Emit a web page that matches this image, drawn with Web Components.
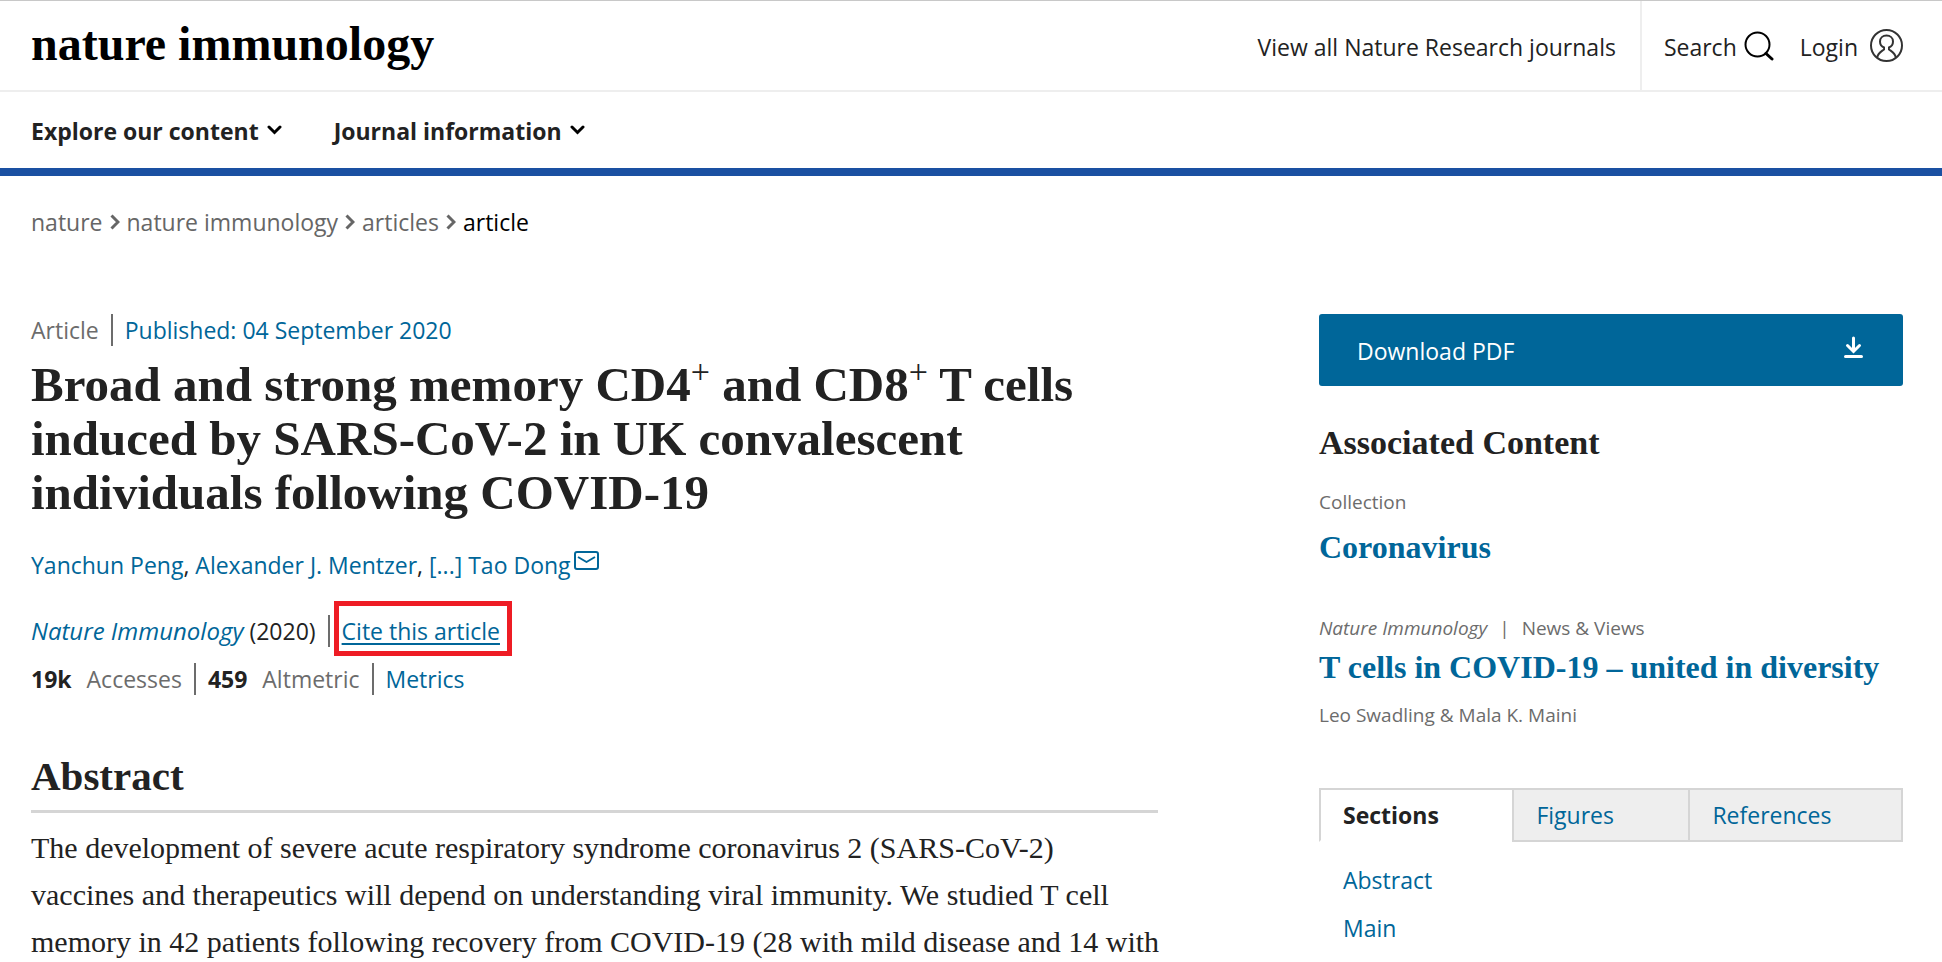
<!DOCTYPE html>
<html lang="en">
<head>
<meta charset="utf-8">
<title>Broad and strong memory CD4+ and CD8+ T cells | Nature Immunology</title>
<style>
  body {
    margin: 0;
    background: #fff;
    color: #222;
    font: 23px/32px "Open Sans", "Noto Sans", sans-serif;
    --serif: "Liberation Serif", serif;
    --link: #069;
    --brand: #1a50a2;
    --muted: #6c6c6c;
    --rule: #d5d5d5;
    --small: 19px;
  }
</style>
</head>
<body>
<journal-page></journal-page>

<template id="journal-header">
  <style>
    :host { display: block; border-top: 1px solid #c8c8c8; border-bottom: 8px solid var(--brand); }
    a, button { color: inherit; text-decoration: none; }
    svg { fill: none; stroke: #000; flex: none; }
    .top { display: flex; align-items: stretch; height: 89px; padding: 0 39px 0 31px; border-bottom: 2px solid #eee; }
    .logo { margin: 0 auto 4px 0; align-self: center; font: bold 48px/54px var(--serif); color: #000; }
    .all { display: flex; align-items: center; padding: 2px 24px 0 0; border-right: 2px solid #eee; }
    .tools { display: flex; align-items: center; gap: 26px; padding-left: 22px; }
    .tools a { display: flex; align-items: center; gap: 7px; }
    .tools a + a { gap: 12px; }
    .tools span { padding-top: 2px; }
    nav { display: flex; align-items: center; gap: 52px; height: 76px; padding: 0 31px; }
    nav button { display: flex; align-items: center; gap: 8px; padding: 0; border: 0; background: none; font: bold 23px/32px "Open Sans", "Noto Sans", sans-serif; }
    nav span { padding-top: 2px; }
  </style>
  <div class="top">
    <a class="logo" href="#">nature immunology</a>
    <a class="all" href="#">View all Nature Research journals</a>
    <div class="tools">
      <a href="#"><span>Search</span>
        <svg width="30" height="30" viewBox="0 0 30 30" stroke-width="2"><circle cx="13.500" cy="13.500" r="12"/><path d="M22 22.500L28 28" stroke-width="3" stroke-linecap="round"/></svg>
      </a>
      <a href="#"><span>Login</span>
        <svg width="33" height="33" viewBox="0 0 33 33" stroke-width="2" style="stroke:#333"><circle cx="16.500" cy="16.500" r="15.500"/><path d="M7.200 28.500C8 24 11 22.800 14 20.500V18.500C11.500 17.500 10 15.500 10 12.500C10 9 12.800 6.500 16.500 6.500C20.200 6.500 23 9 23 12.500C23 15.500 21.500 17.500 19 18.500V20.500C22 22.800 25 24 25.800 28.500"/></svg>
      </a>
    </div>
  </div>
  <nav aria-label="Journal">
    <button type="button"><span>Explore our content</span>
      <svg width="15" height="10" viewBox="0 0 15 10" stroke-width="3" stroke-linecap="round"><path d="M2 2L7.500 7.500L13 2"/></svg>
    </button>
    <button type="button"><span>Journal information</span>
      <svg width="15" height="10" viewBox="0 0 15 10" stroke-width="3" stroke-linecap="round"><path d="M2 2L7.500 7.500L13 2"/></svg>
    </button>
  </nav>
</template>

<template id="bread-crumbs">
  <style>
    :host { display: block; margin-bottom: 76px; }
    ol { display: flex; margin: 0; padding: 0; list-style: none; gap: 7px; color: #000; }
    li { display: flex; align-items: center; gap: 7px; }
    a { color: #666; text-decoration: none; }
    svg { fill: none; stroke: #666; }
  </style>
  <ol></ol>
</template>

<template id="meta-row">
  <style>
    :host { display: flex; align-items: center; }
    ::slotted(*) { white-space: nowrap; }
    ::slotted(:not(:last-child)) { margin-right: 12px; padding-right: 12px; border-right: 2px solid var(--muted); }
  </style>
  <slot></slot>
</template>

<template id="article-main">
  <style>
    :host { display: block; }
    a { color: var(--link); text-decoration: none; }
    h1, h2 { font-family: var(--serif); margin: 0; }
    h1 { margin-top: 12px; font-size: 49px; line-height: 54px; white-space: nowrap; }
    sup { font-size: 34px; line-height: 0; font-weight: normal; vertical-align: 18px; }
    .muted { color: var(--muted); }
    .authors { margin: 29px 0 34px; }
    .authors svg { margin-left: 3px; fill: none; stroke: var(--link); vertical-align: 4px; }
    .metrics { margin-top: 16px; }
    .metrics b { margin-right: 15px; color: #222; }
    .journal { font-size: 24px; }
    .cite { position: relative; text-decoration: underline; text-decoration-thickness: 2px; text-underline-offset: 3px; }
    .mark { position: absolute; inset: -14px -12px -9px -8px; border: 5px solid #ee1c24; pointer-events: none; }
    h2 { margin-top: 57px; padding-bottom: 10px; border-bottom: 3px solid var(--rule); font-size: 41px; line-height: 48px; }
    p { margin: 0; }
    .abstract { margin-top: 11px; font: 30px/47px var(--serif); }
    .abstract span { display: block; white-space: nowrap; }
  </style>
  <meta-row><span class="muted">Article</span><a href="#">Published: 04 September 2020</a></meta-row>
  <h1>Broad and strong memory CD4<sup>+</sup> and CD8<sup>+</sup> T cells<br>induced by SARS-CoV-2 in UK convalescent<br>individuals following COVID-19</h1>
  <p class="authors"><a href="#">Yanchun Peng</a>, <a href="#">Alexander J. Mentzer</a>, <a href="#">[...]</a> <a href="#">Tao Dong<svg width="25" height="19" viewBox="0 0 25 19" stroke-width="2"><rect x="1" y="1" width="23" height="17" rx="2"/><path d="M4 6L12.500 11L21 6" stroke-linejoin="round"/></svg></a></p>
  <meta-row><span><a class="journal" href="#"><i>Nature Immunology</i></a> (2020)</span><a class="cite" href="#">Cite this article<span class="mark"></span></a></meta-row>
  <meta-row class="metrics"><span class="muted"><b>19k</b>Accesses</span><span class="muted"><b>459</b>Altmetric</span><a href="#">Metrics</a></meta-row>
  <h2>Abstract</h2>
  <p class="abstract"><span>The development of severe acute respiratory syndrome coronavirus 2 (SARS-CoV-2) </span><span>vaccines and therapeutics will depend on understanding viral immunity. We studied T cell </span><span>memory in 42 patients following recovery from COVID-19 (28 with mild disease and 14 with</span></p>
</template>

<template id="related-item">
  <style>
    :host { display: block; color: var(--muted); font-size: var(--small); line-height: 28px; }
    h3 { margin: 0; font: bold 32px/40px var(--serif); white-space: nowrap; }
    a { color: var(--link); text-decoration: none; }
  </style>
  <slot name="kind"></slot>
  <h3><a href="#"><slot></slot></a></h3>
  <slot name="by"></slot>
</template>

<template id="section-tabs">
  <style>
    :host { display: block; }
    .tabs { display: flex; }
    button { flex: 174 1 0; height: 54px; padding: 0 0 0 22px; border: 2px solid var(--rule); border-right-width: 0; background: #eee; color: var(--link); font: inherit; text-align: left; }
    button:first-child { flex-grow: 194; border-bottom-color: #fff; background: #fff; color: #222; font-weight: bold; }
    button:last-child { flex-grow: 216; border-right-width: 2px; }
    ul { margin: 14px 0 0; padding: 0 0 0 24px; list-style: none; line-height: 48px; }
    a { color: var(--link); text-decoration: none; }
  </style>
  <div class="tabs" role="tablist">
    <button role="tab" aria-selected="true">Sections</button>
    <button role="tab" aria-selected="false">Figures</button>
    <button role="tab" aria-selected="false">References</button>
  </div>
  <ul><li><a href="#">Abstract</a></li><li><a href="#">Main</a></li></ul>
</template>

<template id="article-aside">
  <style>
    :host { display: block; }
    .pdf { display: flex; justify-content: space-between; align-items: center; height: 72px; padding: 0 40px 0 38px; border-radius: 3px; background: var(--link); color: #fff; text-decoration: none; }
    .pdf span { padding-top: 2px; }
    .pdf svg { fill: none; stroke: #fff; margin-bottom: 6px; }
    h2 { margin: 37px 0 25px; font: bold 34px/40px var(--serif); }
    .kind { display: block; margin-bottom: 11px; }
    .news .kind { margin-bottom: 5px; }
    .news { margin: 47px 0 59px; }
    .bar { margin: 0 12px; }
    .by { display: block; margin-top: 14px; }
  </style>
  <a class="pdf" href="#"><span>Download PDF</span>
    <svg width="19" height="22" viewBox="0 0 19 22" stroke-width="3" stroke-linecap="round"><path d="M9.500 2V14M3.500 9.500L9.500 15.500L15.500 9.500M1.500 20.500H17.500"/></svg>
  </a>
  <h2>Associated Content</h2>
  <related-item><span slot="kind" class="kind">Collection</span>Coronavirus</related-item>
  <related-item class="news"><span slot="kind" class="kind"><i>Nature Immunology</i><span class="bar">|</span>News &amp; Views</span>T cells in COVID-19 – united in diversity<span slot="by" class="by">Leo Swadling &amp; Mala K. Maini</span></related-item>
  <section-tabs></section-tabs>
</template>

<template id="journal-page">
  <style>
    :host { display: block; }
    main { padding: 30px 39px 0 31px; }
    .columns { display: grid; grid-template-columns: minmax(0, 1127fr) minmax(0, 584fr); column-gap: 161px; }
  </style>
  <journal-header></journal-header>
  <main>
    <bread-crumbs items="nature/nature immunology/articles/article"></bread-crumbs>
    <div class="columns">
      <article-main></article-main>
      <article-aside></article-aside>
    </div>
  </main>
</template>

<script>
  class TemplateElement extends HTMLElement {
    constructor() {
      super();
      const template = document.getElementById(this.localName);
      this.attachShadow({ mode: "open" }).append(template.content.cloneNode(true));
    }
  }

  class BreadCrumbs extends TemplateElement {
    connectedCallback() {
      const chevron = '<svg width="10" height="16" viewBox="0 0 10 16" stroke-width="3"><path d="M1.500 1.500L8 8L1.500 14.500"/></svg>';
      const items = this.getAttribute("items").split("/");
      this.shadowRoot.querySelector("ol").innerHTML = items.map((name, i) =>
        i < items.length - 1
          ? `<li><a href="#">${name}</a>${chevron}</li>`
          : `<li aria-current="page">${name}</li>`).join("");
    }
  }

  for (const name of ["journal-header", "meta-row", "article-main", "related-item", "section-tabs", "article-aside"]) {
    customElements.define(name, class extends TemplateElement {});
  }
  customElements.define("bread-crumbs", BreadCrumbs);
  customElements.define("journal-page", class extends TemplateElement {});
</script>
</body>
</html>
